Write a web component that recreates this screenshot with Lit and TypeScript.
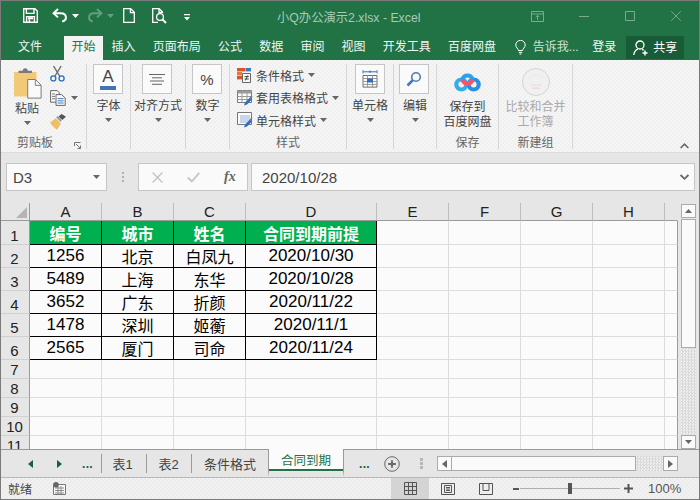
import { LitElement, html, css, svg } from "lit";
import { customElement } from "lit/decorators.js";

const caret = (c = "#666") => html`<svg class="caret" width="7" height="4" viewBox="0 0 7 4"><path d="M0 0h7L3.5 4z" fill=${c}/></svg>`;

const SAVE = html`<svg width="15" height="15" viewBox="0 0 15 15" fill="none" stroke="#fff" stroke-width="1.4"><path d="M.7.7h11.2l2.4 2.4v11.2H.7z"/><path d="M3.4 1v4.4h7.6V1"/><path d="M3.6 14V8.6h7.8V14"/><path d="M5 9.2h5v2H5zM5.6 11.5h1.6v2.4H5.6z" fill="#fff" stroke="none"/></svg>`;
const UNDO = html`<svg width="16" height="15" viewBox="0 0 16 15" fill="none" stroke="#fff" stroke-width="2"><path d="M6 1 1.6 5.2 6 9.4"/><path d="M2 5.2h7c6 0 6.6 7.2 1.2 8.4"/></svg>`;
const NEWDOC = html`<svg width="12" height="15" viewBox="0 0 12 15" fill="none" stroke="#fff" stroke-width="1.3"><path d="M.7.7h7l3.6 3.6v10H.7z"/><path d="M7.4 1v3.6h3.6"/></svg>`;
const PREVIEW = html`<svg width="16" height="16" viewBox="0 0 16 16" fill="none" stroke="#fff" stroke-width="1.3"><path d="M6 14.4H.7V.7h6.4l3.4 3.4v1"/><path d="M7 1v3.4h3.4"/><circle cx="8" cy="9" r="3.4"/><path d="m10.4 11.4 3.6 3.6" stroke-width="2"/></svg>`;
const CUSTOM = html`<svg width="6" height="7" viewBox="0 0 6 7" fill="#fff"><path d="M0 0h6v1.2H0zM0 3h6L3 6.5z"/></svg>`;
const RESTORE = html`<svg width="13" height="11" viewBox="0 0 13 11" fill="none" stroke="#fff" stroke-width="1"><path d="M.5.5h12v10H.5zM.5 3h12M6.5 9V4.6M4.6 6.2l1.9-1.9 1.9 1.9"/></svg>`;
const MINI = html`<svg width="10" height="10" viewBox="0 0 10 10" stroke="#fff" stroke-width="1"><path d="M0 5.5h10"/></svg>`;
const MAXI = html`<svg width="10" height="10" viewBox="0 0 10 10" fill="none" stroke="#fff" stroke-width="1"><path d="M.5.5h9v9h-9z"/></svg>`;
const CLOSE = html`<svg width="10" height="10" viewBox="0 0 10 10" fill="none" stroke="#fff" stroke-width="1"><path d="m.3.3 9.4 9.4M9.7.3.3 9.7"/></svg>`;
const BULB = html`<svg width="11" height="15" viewBox="0 0 11 15" fill="none" stroke="#fff" stroke-width="1"><path d="M3.5 10.5C3.2 8.6.8 7.6.8 5a4.7 4.7 0 0 1 9.4 0c0 2.6-2.4 3.6-2.7 5.5z"/><path d="M3.8 12.3h3.4M4.5 14h2"/></svg>`;
const USER = html`<svg width="16" height="16" viewBox="0 0 16 16" fill="none" stroke="#fff" stroke-width="1.3"><circle cx="7" cy="5" r="4"/><path d="M.8 15c.3-3.4 2-5 4-5.8M9.2 9.4c.6.3 1.1.6 1.5 1"/><path d="M12 10.5v5M9.5 13h5" stroke-width="1.4"/></svg>`;

const PASTE = html`<svg width="29" height="31" viewBox="0 0 29 31"><path d="M1 4h22.5v24.5H1z" fill="#f2c979"/><path d="M5.5 5V2.8h4.2a2.5 2.5 0 0 1 5 0H19V5z" fill="#7a7a7a"/><path d="M14.7 11.5h7.8l5.6 5.6v13H14.7z" fill="#fafafa" stroke="#7d7d7d"/><path d="M22.3 11.8v5.5h5.6" fill="none" stroke="#7d7d7d"/></svg>`;
const CUT = html`<svg width="15" height="16" viewBox="0 0 15 16" fill="none"><path d="M3.5 0 9.6 10M11.2 0 5 10" stroke="#6d6d6d" stroke-width="1.4"/><circle cx="3.3" cy="12.4" r="2.5" stroke="#2a6fb8" stroke-width="1.3"/><circle cx="11.6" cy="12.4" r="2.5" stroke="#2a6fb8" stroke-width="1.3"/></svg>`;
const COPY = html`<svg width="16" height="16" viewBox="0 0 16 16" fill="none"><path d="M.6.6h6.6l2 2v9.6H.6z" fill="#fafafa" stroke="#666"/><path d="M6 4.6h5.6l3.6 3.4v7.4H6z" fill="#fafafa" stroke="#666"/><path d="M2 4h3M2 6.4h3M2 8.8h3" stroke="#777"/><path d="M7.6 8.6h6M7.6 10.8h6M7.6 13h6" stroke="#3f78c2"/></svg>`;
const BRUSH = html`<svg width="17" height="16" viewBox="0 0 17 16"><path d="M0 8.4 5.8 4.2l5 5.4-3.6 6.2C4.6 14.4 1.6 11.6 0 8.4z" fill="#f0bf64"/><path d="m6.2 3.6 1.7-1.6 3.8 4.2-1 1.8z" fill="#9a9a9a"/><path d="m8.6 2.4 3-2.4 4.4 2.8-3.8 3.2z" fill="#555"/></svg>`;
const LAUNCH = html`<svg width="7" height="7" viewBox="0 0 7 7" fill="none" stroke="#777"><path d="M.5 4V.5H6.5"/><path d="m2 2 4.5 4.5M6.5 3.5v3h-3"/></svg>`;
const ALIGN = html`<svg width="16" height="11" viewBox="0 0 16 11" stroke="#666"><path d="M0 .5h16M3 3.8h10M1 7h14M3 10.3h10"/></svg>`;
const CELLS = html`<svg width="16" height="18" viewBox="0 0 16 18" fill="none"><path d="M1.5 1.8h13" stroke="#2a6fb8"/><path d="M1 .2v3.2M15 .2v3.2M8 .5v2.4" stroke="#2a6fb8"/><path d="M1 5.5h14v11.6H1z" fill="#fafafa" stroke="#6e6e6e"/><path d="M1 8.5h14M1 11.5h14M1 14.5h14M5.5 5.5v11.6M10.5 5.5v11.6" stroke="#9a9a9a"/><path d="M5 8.5h6v4H5z" fill="#2f6fbf"/></svg>`;
const FIND = html`<svg width="16" height="16" viewBox="0 0 16 16" fill="none"><circle cx="10" cy="6" r="4.3" stroke="#4d7db5" stroke-width="1.6"/><path d="M6.8 9.2 1.5 14.5" stroke="#3f78c2" stroke-width="2.6"/></svg>`;
const COND = html`<svg width="14" height="15" viewBox="0 0 14 15"><path d="M0 0h8v3.4H0z" fill="#d9542b"/><path d="M8.5 0H14v3.4H8.5z" fill="#3f78c2"/><path d="M0 4h5v3.4H0z" fill="#e8793c"/><path d="M0 8h5v3.4H0z" fill="#d9542b"/><path d="M5.5 5.5h8v9h-8z" fill="#fafafa" stroke="#666"/><path d="M7.6 8.6h4.2M7.6 11h4.2M10.8 7.4l-2.4 5" stroke="#444" fill="none"/></svg>`;
const TABLE = html`<svg width="16" height="16" viewBox="0 0 16 16" fill="none"><path d="M.5.5h14v12H.5z" fill="#fafafa" stroke="#777"/><path d="M.5.5h14v3H.5z" fill="#9a9a9a"/><path d="M.5 6.5h14M.5 9.5h14M5 .5v12M10 .5v12" stroke="#9a9a9a"/><path d="m7 15.5 1-3 5-5 2 2-5 5z" fill="#2f6fbf"/><path d="m12.5 7.500 2-2 1 1-1.500 2z" fill="#777"/></svg>`;
const STYLE = html`<svg width="16" height="16" viewBox="0 0 16 16" fill="none"><path d="M.5.5h14v12H.5z" fill="#fafafa" stroke="#777"/><path d="M3 3h10v8H3z" fill="#c7d6e8"/><path d="m7 15.5 1-3 5-5 2 2-5 5z" fill="#2f6fbf"/><path d="m12.5 7.500 2-2 1 1-1.500 2z" fill="#777"/></svg>`;
const CLOUD = html`<svg width="27" height="22" viewBox="0 0 27 22" fill="none" stroke-width="4.2"><circle cx="7.3" cy="14.5" r="5" stroke="#33aee8"/><circle cx="19.7" cy="14.5" r="5" stroke="#2a8fe0"/><path d="M8.6 10a5.8 5.800 0 0 1 0-.5 5 5 0 0 1 9.800 0" stroke="#2f9fe8"/><path d="M18.4 9.500a5 5 0 0 1-9.800 0" stroke="#f2566f"/></svg>`;
const DISC = html`<svg width="30" height="28" viewBox="0 0 30 28"><circle cx="15" cy="14" r="13.500" fill="#f0f0f0" stroke="#d4d4d4"/><path d="M7 11c3-5 13-5 16 0" stroke="#e2e2e2" stroke-dasharray="1 1" fill="none"/>${[0, 1, 2, 3].map((i) => svg`<circle cx=${11 + i * 2.7} cy="17" r=".6" fill="#eca6ac"/><circle cx=${12.3 + i * 1.8} cy="20" r=".6" fill="#eca6ac"/>`)}</svg>`;
const CHEV_UP = html`<svg width="9" height="6" viewBox="0 0 9 6" fill="none" stroke="#666" stroke-width="1.6"><path d="m.6 5 3.9-3.800L8.400 5"/></svg>`;
const CHEV_DN = html`<svg width="9" height="7" viewBox="0 0 9 7" fill="none" stroke="#666" stroke-width="1.8"><path d="m.6 1 3.9 3.800L8.400 1"/></svg>`;
const X_ICON = html`<svg width="11" height="11" viewBox="0 0 11 11" stroke="#c4c4c4" stroke-width="1.4"><path d="m.6.6 9.8 9.800M10.400.6.600 10.400"/></svg>`;
const CHECK = html`<svg width="13" height="11" viewBox="0 0 13 11" fill="none" stroke="#c4c4c4" stroke-width="1.8"><path d="m.8 5.500 4 4L12.200.8"/></svg>`;
const CORNER = html`<svg width="11" height="11" viewBox="0 0 11 11"><path d="M11 0v11H0z" fill="#b5b5b5"/></svg>`;
const arrow = (d: string, c = "#666") => html`<svg width="5" height="8" viewBox="0 0 5 8"><path d=${d} fill=${c}/></svg>`;
const PLUS_C = html`<svg width="16" height="16" viewBox="0 0 16 16" fill="none" stroke="#666"><circle cx="8" cy="8" r="7.3"/><path d="M8 4.200v7.600M4.200 8h7.600" stroke-width="1.8"/></svg>`;
const MACRO = html`<svg width="13" height="13" viewBox="0 0 13 13"><path d="M.5 2.500h12v10H.5z" fill="#fafafa" stroke="#777"/><path d="M2 6h9M2 8.500h9M2 11h9M5 4v8M8 4v8" stroke="#8a8a8a"/><circle cx="3" cy="2.800" r="2.800" fill="#666"/></svg>`;
const V_GRID = html`<svg width="13" height="13" viewBox="0 0 13 13" fill="none" stroke="#555"><path d="M.5.5h12v12H.5zM.5 4.500h12M.5 8.500h12M4.500.5v12M8.500.5v12"/></svg>`;
const V_PAGE = html`<svg width="14" height="12" viewBox="0 0 14 12" fill="none" stroke="#555"><path d="M.5.5h13v11H.5z"/><path d="M3.500 2.500h7v7h-7zM5 4.500h4M5 6h4M5 7.500h4"/></svg>`;
const V_BRK = html`<svg width="14" height="12" viewBox="0 0 14 12" fill="none" stroke="#555"><path d="M.5.5h13v11H.5zM4 .5v7h6v-7"/></svg>`;

const TABLE_ROWS = [
  ["1256", "北京", "白凤九", "2020/10/30"],
  ["5489", "上海", "东华", "2020/10/28"],
  ["3652", "广东", "折颜", "2020/11/22"],
  ["1478", "深圳", "姬蘅", "2020/11/1"],
  ["2565", "厦门", "司命", "2020/11/24"],
];
const HEAD = ["编号", "城市", "姓名", "合同到期前提"];
const COLS = ["A", "B", "C", "D", "E", "F", "G", "H", ""];

@customElement("app-root")
export class AppRoot extends LitElement {
  static styles = css`
    :host {
      display: flex; flex-direction: column; width: 700px; height: 500px; box-sizing: border-box;
      font-family: "Liberation Sans", "Noto Sans CJK SC", sans-serif; font-size: 12px; color: #444;
      background: #e6e6e6; overflow: hidden; outline: 1px solid #7a7a7a; outline-offset: -1px;
    }
    svg { display: block; flex: none; }
    .title { height: 36px; flex: none; display: flex; align-items: flex-start; padding-top: 8px; box-sizing: border-box; background: #217346; color: #fff; }
    .title .save { margin-left: 23px; }
    .title .undo { margin-left: 14px; }
    .title .cr1 { margin: 6px 0 0 4px; }
    .title .redo { margin-left: 8px; transform: scaleX(-1); opacity: .3; }
    .title .cr2 { margin: 6px 0 0 4px; opacity: .3; }
    .title .doc { margin-left: 9px; }
    .title .prev { margin-left: 17px; }
    .title .cust { margin: 6px 0 0 16px; }
    .title .name { margin: 1px 0 0 87px; width: 143px; font-size: 12.3px; line-height: 18px; color: #a6cbb6; white-space: nowrap; }
    .title .w { opacity: .4; margin-top: 3px; }
    .title .w1 { margin-left: 111px; }
    .title .w2 { margin-left: 35px; }
    .title .w3 { margin-left: 36px; }
    .title .w4 { margin-left: 36px; }

    .tabs { height: 24px; flex: none; display: flex; background: #217346; color: #f1f6f3; line-height: 22px; }
    .tab { padding: 0 8.6px; white-space: nowrap; }
    .tab.file { margin-left: 9.4px; margin-right: 13.4px; }
    .tab.on { background: #f3f3f3; color: #217346; padding: 0 7.5px; }
    .bulb { margin: 4px 0 0 10px; }
    .tell { margin-left: 7px; color: #cfe2d7; white-space: nowrap; width: 47px; }
    .login { margin-left: 12.5px; white-space: nowrap; }
    .share { margin-left: 10px; width: 58px; height: 23px; background: #185c37; display: flex; align-items: center; box-sizing: border-box; padding-left: 7px; gap: 4px; color: #fff; }

    .ribbon {
      height: 93px; flex: none; display: flex; box-sizing: border-box; padding-top: 4px;
      background: repeating-conic-gradient(#f5f5f5 0 25%, #f0f0f0 0 50%) 0 0 / 4px 4px; border-bottom: 1px solid #dcdcdc;
    }
    .g { height: 85px; box-sizing: border-box; border-right: 1px solid #d6d6d6; display: flex; flex-direction: column; align-items: center; flex: none; }
    .lbl { line-height: 15px; white-space: nowrap; text-align: center; }
    .glabel { margin-top: auto; line-height: 12px; color: #666; white-space: nowrap; }
    .box { width: 30px; height: 30px; box-sizing: border-box; border: 1px solid #c6c6c6; background: #fafafa; display: flex; flex-direction: column; align-items: center; justify-content: center; }
    .g .boxlbl { margin-top: 4px; line-height: 16px; white-space: nowrap; }
    .g .boxcr { margin-top: 4px; }
    .w-clip { width: 87px; align-items: stretch; }
    .w-font { width: 44px; }
    .w-align { width: 55px; }
    .w-num { width: 44px; }
    .w-style { width: 117px; align-items: stretch; }
    .w-cell { width: 47px; }
    .w-edit { width: 43px; }
    .w-font .box, .w-num .box { margin-right: 1px; }
    .w-align .box, .w-edit .box { margin-right: 2px; }
    .w-save { width: 62px; padding-top: 6px; }
    .w-new { width: 74px; padding-top: 4px; color: #aaa; }
    .clip-top { display: flex; padding-left: 11px; }
    .pastecol { width: 32px; display: flex; flex-direction: column; align-items: center; padding-top: 4px; }
    .pastecol .lbl { margin-top: 2px; line-height: 16px; }
    .pastecol .caret { margin-top: 4px; }
    .smallcol { margin-left: 7px; display: flex; flex-direction: column; padding-top: 2px; gap: 8px; }
    .copyrow { display: flex; align-items: center; gap: 5px; }
    .clip-foot { margin-top: auto; display: flex; align-items: flex-end; padding-left: 17px; gap: 21px; }
    .clip-foot .glabel { margin-top: 0; }
    .letter { font-size: 17px; line-height: 16px; color: #444; }
    .abar { width: 16px; height: 4px; background: #4472b4; margin-top: 1px; }
    .pct { font-size: 15px; color: #444; }
    .stylerow { height: 22.5px; display: flex; align-items: center; padding-left: 7px; white-space: nowrap; }
    .stylerow .txt { margin: 0 4px 0 5px; }
    .stylerow .wide { margin-left: 3px; }
    .w-style .glabel { align-self: center; }
    .w-save .first { margin-top: 8px; }
    .w-new .first { margin-top: 4px; }
    .w-new .glabel { color: #666; }
    .fold { flex: 1; display: flex; justify-content: flex-end; align-items: flex-end; padding: 0 11px 3px 0; }

    .fbar { height: 50px; flex: none; display: flex; box-sizing: border-box; padding-top: 10px; align-items: flex-start; font-size: 15px; }
    .fbox { height: 28px; box-sizing: border-box; border: 1px solid #c6c6c6; background: #fafafa; display: flex; align-items: center; }
    .namebox { margin-left: 6px; width: 101px; padding: 0 6px; justify-content: space-between; }
    .dots { margin: 9px 0 0 15px; width: 2px; height: 10px; background: repeating-linear-gradient(#b0b0b0 0 2px, transparent 2px 4px); }
    .fx { margin-left: 14px; width: 110px; padding-left: 13px; }
    .fx .chk { margin-left: 24px; }
    .fx .f { margin-left: 24px; font: italic 14px "Liberation Serif", serif; color: #666; font-weight: 700; }
    .input { margin-left: 3px; width: 444px; padding: 0 5px 0 10px; justify-content: space-between; }

    .main { height: 246px; flex: none; display: flex; }
    .sheet {
      width: 678px; height: 246px; overflow: hidden; flex: none; display: grid; background: #fbfbfb;
      grid-template-columns: 30px 72px 72px 72px 131px 72px 72px 72px 72px 13px;
      grid-template-rows: 18px 24px repeat(5, 23px) repeat(5, 19px);
    }
    .cell { box-sizing: border-box; border-right: 1px solid #dcdcdc; border-bottom: 1px solid #dcdcdc; display: flex; align-items: center; justify-content: center; font-size: 16px; color: #000; white-space: nowrap; }
    .end { border-right-color: #9a9a9a; }
    .ch { background: #e6e6e6; border-bottom: 1px solid #9a9a9a; border-right: 1px solid #bdbdbd; font-size: 15px; color: #222; align-items: flex-end; line-height: 17px; }
    .ch.end { background: #e6e6e6; border-right-color: #e6e6e6; }
    .corner { justify-content: flex-end; align-items: flex-end; padding: 0 2px 2px 0; border-right-color: #9a9a9a; }
    .rh { background: #e6e6e6; border-right: 1px solid #9a9a9a; border-bottom: 1px solid #d0d0d0; font-size: 15px; color: #222; align-items: flex-end; line-height: 16px; }
    .t { border-right-color: #000; border-bottom-color: #000; }
    .num { font-size: 17px; }
    .h { background: #00b050; color: #fff; font-weight: 700; }
    .vs { flex: 1; padding: 1px 0 0 3px; display: flex; flex-direction: column; }
    .sbtn { width: 15px; height: 14px; box-sizing: border-box; border: 1px solid #ababab; background: #fafafa; display: flex; align-items: center; justify-content: center; flex: none; }
    .vthumb { width: 15px; height: 129px; box-sizing: border-box; border: 1px solid #ababab; background: #fafafa; margin-top: 1px; flex: none; }
    .dither { background: repeating-conic-gradient(#d9d9d9 0 25%, #eeeeee 0 50%) 0 0 / 3px 3px; }
    .vtrack { flex: 1; width: 15px; }

    .sheets { height: 29px; flex: none; box-sizing: border-box; border-top: 1px solid #9a9a9a; border-bottom: 1px solid #b8b8b8; display: flex; align-items: center; font-size: 13px; color: #444; }
    .nav { width: 5px; margin-left: 28px; }
    .nav2 { margin-left: 24px; }
    .more { color: #14613a; font-weight: 700; font-size: 12px; line-height: 12px; letter-spacing: .3px; margin-left: 20px; width: 11px; }
    .stab { height: 100%; display: flex; align-items: center; justify-content: center; box-sizing: border-box; }
    .sep { width: 1px; height: 19px; background: #9a9a9a; flex: none; }
    .s1 { width: 44px; padding-right: 3px; } .s2 { width: 44px; padding-right: 1px; } .s3 { width: 76px; }
    .sheets .sep0 { margin-left: 8px; }
    .stab.on { width: 76px; height: 28px; margin-top: -2px; background: #fbfbfb; color: #217346; border-left: 1px solid #9a9a9a; border-right: 1px solid #9a9a9a; border-bottom: 6px solid #e6e6e6; box-shadow: inset 0 -2px #217346; font-size: 12.5px; }
    .more2 { margin-left: 15px; }
    .plus { margin-left: 14px; }
    .dots2 { margin-left: 20px; width: 3px; height: 11px; background: repeating-linear-gradient(#b8b8b8 0 3px, transparent 3px 4px); }
    .hs { margin-left: 14px; width: 241px; height: 15px; display: flex; }
    .hs .sbtn { width: 15px; height: 15px; }
    .hthumb { width: 184px; height: 15px; box-sizing: border-box; border: 1px solid #ababab; border-left: 0; background: #fafafa; }
    .htrack { flex: 1; }

    .status { flex: 1; display: flex; align-items: center; height: 21px; box-sizing: border-box; padding-bottom: 1px; background: repeating-conic-gradient(#f1f1f1 0 25%, #ececec 0 50%) 0 0 / 4px 4px; }
    .ready { margin-left: 8px; width: 24px; }
    .mac { margin-left: 21px; }
    .vact { margin-left: 325px; width: 38px; height: 100%; background: #d4d4d4; display: flex; align-items: center; justify-content: center; }
    .v2 { margin-left: 12px; }
    .v3 { margin-left: 24px; }
    .minus { margin-left: 20px; width: 6px; height: 2px; background: #555; }
    .slider { margin-left: 1px; width: 100px; height: 1px; background: #b0b0b0; display: flex; justify-content: center; align-items: center; }
    .knob { width: 4px; height: 11px; background: #555; flex: none; }
    .plusz { margin-left: 4px; }
    .zoom { margin-left: 15px; font-size: 13px; color: #555; }
  `;

  private renderSheet() {
    const out: unknown[] = [];
    COLS.forEach((c, i) => {
      if (i === 0) out.push(html`<div class="cell ch corner">${CORNER}</div>`);
      out.push(html`<div class="cell ch ${c ? "" : "end"}">${c}</div>`);
    });
    for (let r = 1; r <= 11; r++) {
      out.push(html`<div class="cell rh">${r}</div>`);
      for (let c = 0; c < 9; c++) {
        if (r === 1 && c < 4) out.push(html`<div class="cell t h">${HEAD[c]}</div>`);
        else if (r >= 2 && r <= 6 && c < 4) {
          const v = TABLE_ROWS[r - 2][c];
          out.push(html`<div class="cell t ${/^\d/.test(v) ? "num" : ""}">${v}</div>`);
        } else out.push(html`<div class="cell ${c === 8 ? "end" : ""}"></div>`);
      }
    }
    return out;
  }

  render() {
    return html`
      <div class="title">
        <div class="save">${SAVE}</div>
        <div class="undo">${UNDO}</div><div class="cr1">${caret("#fff")}</div>
        <div class="redo">${UNDO}</div><div class="cr2">${caret("#fff")}</div>
        <div class="doc">${NEWDOC}</div><div class="prev">${PREVIEW}</div><div class="cust">${CUSTOM}</div>
        <div class="name">小Q办公演示2.xlsx - Excel</div>
        <div class="w w1">${RESTORE}</div><div class="w w2">${MINI}</div><div class="w w3">${MAXI}</div><div class="w w4">${CLOSE}</div>
      </div>
      <div class="tabs">
        <div class="tab file">文件</div><div class="tab on">开始</div>
        ${["插入", "页面布局", "公式", "数据", "审阅", "视图", "开发工具", "百度网盘"].map((t) => html`<div class="tab">${t}</div>`)}
        <div class="bulb">${BULB}</div><div class="tell">告诉我...</div><div class="login">登录</div>
        <div class="share">${USER}<span>共享</span></div>
      </div>
      <div class="ribbon">
        <div class="g w-clip">
          <div class="clip-top">
            <div class="pastecol">${PASTE}<div class="lbl">粘贴</div>${caret()}</div>
            <div class="smallcol">${CUT}<div class="copyrow">${COPY}${caret()}</div>${BRUSH}</div>
          </div>
          <div class="clip-foot"><div class="glabel">剪贴板</div>${LAUNCH}</div>
        </div>
        <div class="g w-font"><div class="box"><span class="letter">A</span><div class="abar"></div></div><div class="boxlbl">字体</div><div class="boxcr">${caret()}</div></div>
        <div class="g w-align"><div class="box">${ALIGN}</div><div class="boxlbl">对齐方式</div><div class="boxcr">${caret()}</div></div>
        <div class="g w-num"><div class="box"><span class="pct">%</span></div><div class="boxlbl">数字</div><div class="boxcr">${caret()}</div></div>
        <div class="g w-style">
          <div class="stylerow">${COND}<span class="txt">条件格式</span>${caret()}</div>
          <div class="stylerow">${TABLE}<span class="txt wide">套用表格格式</span>${caret()}</div>
          <div class="stylerow">${STYLE}<span class="txt wide">单元格样式</span>${caret()}</div>
          <div class="glabel">样式</div>
        </div>
        <div class="g w-cell"><div class="box">${CELLS}</div><div class="boxlbl">单元格</div><div class="boxcr">${caret()}</div></div>
        <div class="g w-edit"><div class="box">${FIND}</div><div class="boxlbl">编辑</div><div class="boxcr">${caret()}</div></div>
        <div class="g w-save">${CLOUD}<div class="lbl first">保存到</div><div class="lbl">百度网盘</div><div class="glabel">保存</div></div>
        <div class="g w-new">${DISC}<div class="lbl first">比较和合并</div><div class="lbl">工作簿</div><div class="glabel">新建组</div></div>
        <div class="fold">${CHEV_UP}</div>
      </div>
      <div class="fbar">
        <div class="fbox namebox"><span>D3</span>${caret("#666")}</div>
        <div class="dots"></div>
        <div class="fbox fx">${X_ICON}<span class="chk">${CHECK}</span><span class="f">fx</span></div>
        <div class="fbox input"><span>2020/10/28</span>${CHEV_DN}</div>
      </div>
      <div class="main">
        <div class="sheet">${this.renderSheet()}</div>
        <div class="vs">
          <div class="sbtn"><svg width="7" height="4" viewBox="0 0 7 4"><path d="M0 4h7L3.5 0z" fill="#666"/></svg></div>
          <div class="vthumb"></div>
          <div class="vtrack dither"></div>
          <div class="sbtn">${caret("#666")}</div>
        </div>
      </div>
      <div class="sheets">
        <div class="nav">${arrow("M5 0v8L0 4z", "#14613a")}</div>
        <div class="nav nav2">${arrow("M0 0v8l5-4z", "#14613a")}</div>
        <div class="more">...</div>
        <div class="sep sep0"></div>
        <div class="stab s1">表1</div><div class="sep"></div>
        <div class="stab s2">表2</div><div class="sep"></div>
        <div class="stab s3">条件格式</div>
        <div class="stab on">合同到期</div>
        <div class="more more2">...</div>
        <div class="plus">${PLUS_C}</div>
        <div class="dots2"></div>
        <div class="hs">
          <div class="sbtn">${arrow("M5 0v8L0 4z")}</div>
          <div class="hthumb"></div>
          <div class="htrack dither"></div>
          <div class="sbtn">${arrow("M0 0v8l5-4z")}</div>
        </div>
      </div>
      <div class="status">
        <div class="ready">就绪</div>
        <div class="mac">${MACRO}</div>
        <div class="vact">${V_GRID}</div>
        <div class="v2">${V_PAGE}</div>
        <div class="v3">${V_BRK}</div>
        <div class="minus"></div>
        <div class="slider"><div class="knob"></div></div>
        <div class="plusz"><svg width="9" height="9" viewBox="0 0 9 9" stroke="#555" stroke-width="2"><path d="M4.5 0v9M0 4.5h9"/></svg></div>
        <div class="zoom">100%</div>
      </div>
    `;
  }
}
